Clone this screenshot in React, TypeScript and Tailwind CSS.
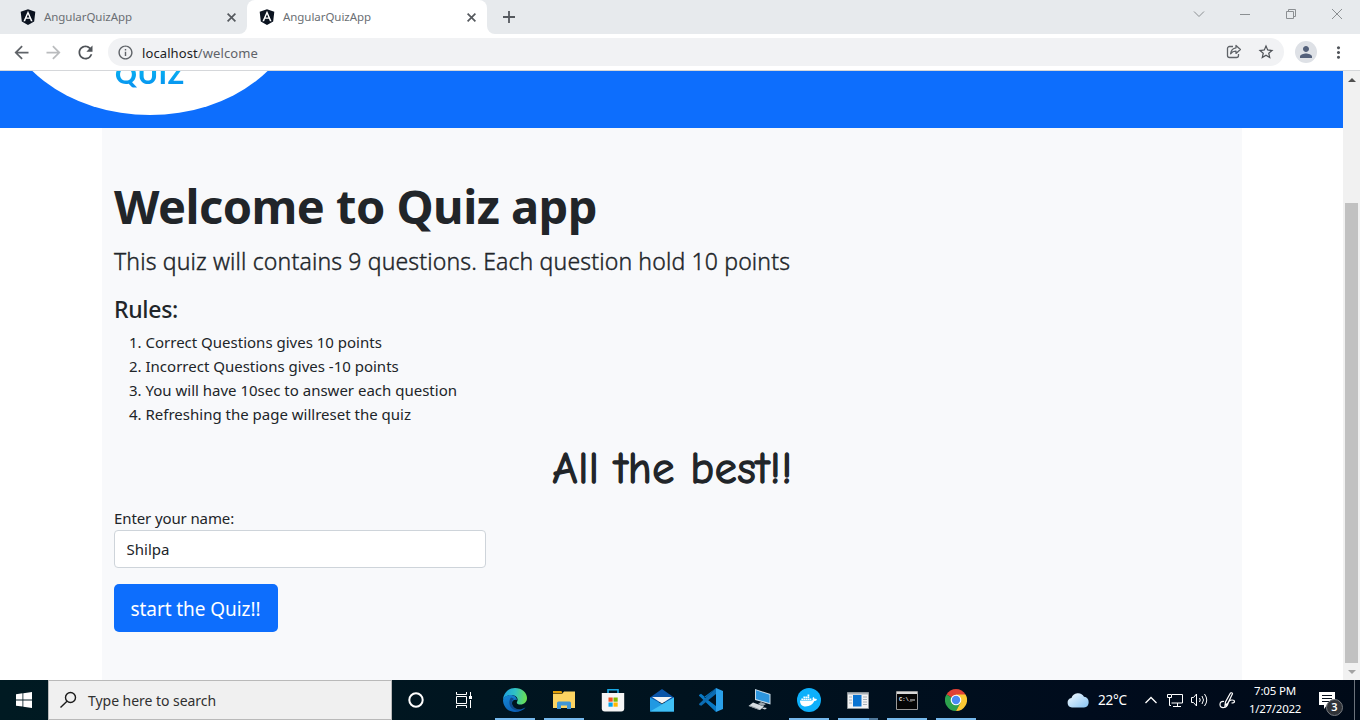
import type { ReactNode } from "react";
import { MdArrowBack, MdArrowForward, MdRefresh, MdInfoOutline, MdStarBorder, MdPerson, MdMoreVert } from "react-icons/md";
import { FaAngular, FaDocker } from "react-icons/fa";

const rules = [
  "Correct Questions gives 10 points",
  "Incorrect Questions gives -10 points",
  "You will have 10sec to answer each question",
  "Refreshing the page willreset the quiz",
];

function TabContent() {
  return (
    <div className="flex h-[34px] items-center pr-[11px] pl-[11px]">
      <FaAngular className="size-[18px] rounded-md bg-[linear-gradient(#fff,#fff)] bg-[length:9px_9px] bg-center bg-no-repeat text-[#0b1320]" />
      <span className="ml-[7px] flex-1 text-[11.5px] tracking-[-0.055px] text-[#6b6f74]">AngularQuizApp</span>
      <svg width="9" height="9" stroke="#55595e" strokeWidth="1.7"><path d="M.6.6l7.800 7.800M8.400.6L.6 8.400" /></svg>
    </div>
  );
}

function WindowControl({ children }: { children: ReactNode }) {
  return (
    <div className="flex h-[28px] w-[46px] items-center justify-center">
      <svg width="12" height="12" viewBox="0 0 12 12" fill="none" stroke="#8b8f92" strokeWidth="1">{children}</svg>
    </div>
  );
}

function Browser() {
  return (
    <header className="h-[71px] shrink-0 border-b border-[#d5d7da] bg-white">
      <div className="flex h-[34px]">
        <div className="w-[247px] rounded-br-[8px] bg-[#e7eaed] pl-2"><TabContent /></div>
        <div className="w-[240px] bg-[linear-gradient(#e7eaed_50%,#fff_50%)]">
          <div className="rounded-t-[8px] bg-white"><TabContent /></div>
        </div>
        <div className="flex flex-1 justify-between rounded-bl-[8px] bg-[#e7eaed]">
          <div className="flex items-center pl-4"><svg width="12" height="12" stroke="#55595e" strokeWidth="1.800"><path d="M6 0v12M0 6h12" /></svg></div>
          <div className="flex">
            <WindowControl><path d="M1 3.5l5 5 5-5" /></WindowControl>
            <WindowControl><path d="M1 6.5h10" /></WindowControl>
            <WindowControl><path d="M1.5 3.5h7v7h-7zM3.5 3.5v-2h7v7h-2" /></WindowControl>
            <WindowControl><path d="M1 1l10 10M11 1L1 11" /></WindowControl>
          </div>
        </div>
      </div>
      <div className="flex h-[36px] items-center text-[#5f6368]">
        <div className="flex w-[108px] items-center gap-[11px] pl-[11px]">
          <MdArrowBack className="size-[21px]" />
          <MdArrowForward className="size-[21px] text-[#babcbe]" />
          <MdRefresh className="size-[21px] text-[#505459]" />
        </div>
        <div className="flex h-[28px] w-[1176px] items-center rounded-full bg-[#f1f2f4] pr-[9px] pl-[9px]">
          <MdInfoOutline className="size-[17px]" />
          <span className="mt-px ml-2 flex-1 text-[13px] leading-5 tracking-[0.1px]"><span className="text-[#202124]">localhost</span>/welcome</span>
          <svg width="16" height="16" viewBox="0 0 16 16" fill="none" stroke="#5f6368" strokeWidth="1.3" strokeLinejoin="round">
            <path d="M7 2.5H3.5a2 2 0 0 0-2 2v7a2 2 0 0 0 2 2h7a2 2 0 0 0 2-2V10" />
            <path d="M10 1.5l4.400 4L10 9.400V7.200C7.500 7.100 6 7.900 4.600 9.800 5 6.500 6.800 4.200 10 3.800z" />
          </svg>
          <MdStarBorder className="ml-[15px] size-[18px] text-[#4d5156]" />
        </div>
        <div className="ml-[11px] flex size-[22px] items-center justify-center rounded-full bg-[#dee1e6]">
          <MdPerson className="size-[18px] text-[#53607a]" />
        </div>
        <MdMoreVert className="ml-[12px] size-[19px] text-[#50545a]" />
      </div>
    </header>
  );
}

function Page() {
  return (
    <div className="h-full min-w-0 flex-1 overflow-hidden bg-white">
      <div className="h-[57px] overflow-hidden bg-[#0d6efd]">
        <div className="-mt-[188px] flex h-[232px] w-[300px] items-end justify-center rounded-[50%] bg-white pb-[26px]">
          <span className="bg-gradient-to-b from-[#12c0f0] to-[#0a8ff0] bg-clip-text font-['Lato',sans-serif] text-[27px] leading-[30px] font-black tracking-[0.8px] text-transparent">QUIZ</span>
        </div>
      </div>
      <main className="ml-[102px] h-[552px] w-[1140px] bg-[#f8f9fb] px-3 pt-[49px] text-[#212529]">
        <h1 className="text-[47px] leading-[58px] font-bold tracking-[-0.53px]">Welcome to Quiz app</h1>
        <p className="mt-2 text-[23px] leading-[36px] font-light tracking-[0.15px] [-webkit-text-stroke:0.4px_#212529]">This quiz will contains 9 questions. Each question hold 10 points</p>
        <h4 className="mt-[16px] text-[23px] leading-[29px] font-medium tracking-[-0.3px]">Rules:</h4>
        <ol className="mt-[6px] flex flex-col text-[15px] leading-6">
          {rules.map((r, i) => (
            <li key={r} className="flex"><span className="mr-1 w-[27.500px] text-right">{i + 1}.</span>{r}</li>
          ))}
        </ol>
        <div className="mt-[17px] pl-px text-center text-[44px] leading-[51px] tracking-[0.7px] font-['Comic_Sans_MS','Comic_Neue',cursive] [-webkit-text-stroke:1.4px_#212529]">All the best!!</div>
        <label className="mt-[12px] block text-[15px] leading-6 tracking-[-0.11px]">Enter your name:</label>
        <div className="flex h-[38px] w-[372px] items-center rounded-[4px] border border-[#ced4da] bg-white px-[11.5px] text-[15px]">Shilpa</div>
        <button className="mt-4 h-[48px] w-[164px] rounded-[5px] bg-[#0d6efd] pt-[2px] pr-px text-[19px] tracking-[-0.07px] text-white">start the Quiz!!</button>
      </main>
    </div>
  );
}

function Scrollbar() {
  return (
    <div className="flex w-[17px] flex-col items-center justify-between bg-[#f1f1f1]">
      <div className="flex h-[17px] items-center"><svg width="8" height="4"><path d="M0 4l4-4 4 4z" fill="#505050" /></svg></div>
      <div className="mt-[115px] h-[460px] w-[13px] bg-[#c1c1c1]" />
      <div className="flex h-[17px] items-center"><svg width="8" height="4"><path d="M0 0l4 4 4-4z" fill="#a3a3a3" /></svg></div>
    </div>
  );
}

function Task({ children, open = false, stacked = false }: { children: ReactNode; open?: boolean; stacked?: boolean }) {
  return (
    <div className="flex h-10 w-[49px] flex-col items-center">
      <div className="flex h-[38px] items-center pt-[2px]">{children}</div>
      {open && (
        <div className="flex h-[2px] w-10 bg-[#76b9ed]">{stacked && <div className="ml-auto w-[9px] bg-[#51799b]" />}</div>
      )}
    </div>
  );
}

function Edge() {
  return (
    <svg width="24" height="24" viewBox="0 0 24 24">
      <defs>
        <linearGradient id="eg" x1="0" y1="0.3" x2="1" y2="0.4"><stop offset="0" stopColor="#1c9fe0" /><stop offset="0.5" stopColor="#30c2c4" /><stop offset="1" stopColor="#6be04f" /></linearGradient>
        <linearGradient id="eb" x1="0" y1="0" x2="0.6" y2="1"><stop offset="0" stopColor="#1588d6" /><stop offset="1" stopColor="#0b5fb4" /></linearGradient>
      </defs>
      <path d="M0 12C.5 5 5.500 0 12 0c7 0 12 4.800 12 10 0 4-3 6.500-6.500 6.500-2.800 0-4.200-1-3.500-2.500 2-3.500-1-7-5.500-7C4 7 1 9.500 0 12z" fill="url(#eg)" />
      <path d="M0 12c1-3.500 4.500-5.500 8.500-5 3 .3 5.500 2.500 5.500 5-4-1-6 2-4.500 5.500 1.500 3.500 5.500 5 9.500 3.500 1.500-.6 2.800-1.300 3.400-1.200C20 22.500 16.500 24 12 24 5 24 0 18.500 0 12z" fill="url(#eb)" />
      <path d="M8 9.500C6 12 5.500 16.500 8.500 20c2.800 3 7.500 3 10.500 1-4 1.200-8-.5-9.500-3.500-1.400-3-.3-5.500 1.500-6.500-1-.8-2-1.300-3-1.500z" fill="#104a8c" />
    </svg>
  );
}

function Taskbar() {
  return (
    <footer className="flex h-10 shrink-0 bg-[linear-gradient(90deg,#001a22,#00131f_50%,#000c1d_80%,#000a18)] text-white">
      <div className="flex w-12 items-center justify-center">
        <svg width="16" height="16" viewBox="0 0 16 16" fill="#fff"><path d="M0 2.200L6.500 1.300V7.500H0zM7.300 1.200L16 0v7.500H7.300zM0 8.400h6.500v6.200L0 13.700zM7.300 8.400H16V16l-8.700-1.200z" /></svg>
      </div>
      <div className="flex w-[344px] items-center border border-[#b9b9b9] bg-[#f0f0f0] pl-[10px]">
        <svg width="18" height="18" viewBox="0 0 18 18" fill="none" stroke="#1b1b1b" strokeWidth="1.4"><circle cx="11.500" cy="6.500" r="5" /><path d="M8 10.200L1.500 16.500" /></svg>
        <span className="ml-[11px] text-[14px] tracking-[-0.04px] text-[#303030]">Type here to search</span>
      </div>
      <div className="flex w-12 items-center justify-center">
        <svg width="16" height="16"><circle cx="8" cy="8" r="6.700" fill="none" stroke="#fff" strokeWidth="2" /></svg>
      </div>
      <div className="mr-[2px] flex w-12 items-center justify-center">
        <svg width="16" height="16" fill="none" stroke="#fff"><path d="M.5 0v2.500h10V0M.5 16v-2.500h10V16M.5 4.500h10v7H.5zM14.500 0v4M14.500 8v8" /><path d="M13 4h3v3h-3z" fill="#fff" stroke="none" /></svg>
      </div>
      <Task open><Edge /></Task>
      <Task open>
        <svg width="22" height="20" viewBox="0 0 22 20"><path d="M0 4h9l2-2.500h11V18H0z" fill="#fcd462" /><path d="M0 1h8.500l1 2.500H0z" fill="#e3a008" /><path d="M4 19v-6q0-1.500 1.500-1.500h11q1.500 0 1.500 1.500v6h-4v-3.500H8V19z" fill="#3f96d6" /></svg>
      </Task>
      <Task>
        <svg width="24" height="24" viewBox="0 0 24 24"><path d="M7 6V1.800h10V6" fill="none" stroke="#19a9e5" strokeWidth="1.600" /><path d="M.8 5h22.400v15.500q0 3-3 3H3.800q-3 0-3-3z" fill="#f5f5f5" /><path d="M7.500 9.500h4.200v4.200H7.500z" fill="#f25022" /><path d="M12.500 9.500h4.200v4.200h-4.200z" fill="#7fba00" /><path d="M7.500 14.500h4.200v4.200H7.500z" fill="#00a4ef" /><path d="M12.500 14.500h4.200v4.200h-4.200z" fill="#ffb900" /></svg>
      </Task>
      <Task>
        <svg width="24" height="23" viewBox="0 0 24 23"><path d="M0 8.500L12 0l12 8.500V13H0z" fill="#0a55a8" /><path d="M0 8.500l12 6.500 12-6.500v14H0z" fill="#2199e2" /><path d="M0 22.500L24 8.500v14z" fill="#40c0f5" /><path d="M2 8h20L12 14.500z" fill="#f4f4f4" /></svg>
      </Task>
      <Task>
        <svg width="24" height="24" viewBox="0 0 24 24"><path d="M17 0L6.700 9.400 2 5.800 0 6.900v.8L17 24V18L5 9z" fill="#0879c5" /><path d="M17 0v6L2.300 17.800.2 16.900v-1.200z" fill="#0b6cb2" /><path d="M17 0l7 3v18l-7 3z" fill="#2aa0ea" /></svg>
      </Task>
      <Task>
        <svg width="24" height="22" viewBox="0 0 24 22"><path d="M7 0l15.500 5v10.500L7 11z" fill="#c9dbe8" /><path d="M8 1.300l13.500 4.500v8.300L8 10z" fill="#2d96df" /><path d="M13 13l5 2-3 2-5-2z" fill="#9ba6ae" /><path d="M5 13.500l11 4-4 3.500-11.500-4z" fill="#d5dce0" /><path d="M2 17l9 3.500" stroke="#8b949b" /><path d="M16 18.500l3 .5-2 1.500-3-1z" fill="#d5dce0" /></svg>
      </Task>
      <Task open><div className="flex size-6 items-center justify-center rounded-full bg-[#0db0fb]"><FaDocker className="size-[17px]" /></div></Task>
      <Task open stacked>
        <svg width="22" height="17"><path d="M.5.5h21v16H.5z" fill="#f3f3f3" stroke="#8c9499" /><path d="M1 1h20v1.500H1z" fill="#a9b1b8" /><path d="M6 3h8.500v11.500H6z" fill="#0a74d1" /><path d="M2 5h3M2 8h3M2 11h3M16 5h4M16 7.500h4M16 10h4M16 12.500h4" stroke="#a9b1b8" /></svg>
      </Task>
      <Task open>
        <svg width="22" height="19"><path d="M.5.500h21v18H.5z" fill="#050505" stroke="#9a9a9a" /><path d="M1 1h20v2H1z" fill="#d9d9d9" /><text x="3" y="9.500" fontSize="5.500" fontFamily="Liberation Mono, monospace" fontWeight="bold" fill="#eee">C:\_</text><path d="M14 9h5" stroke="#ddd" /></svg>
      </Task>
      <Task open>
        <svg width="22" height="22" viewBox="0 0 22 22"><path d="M11 11L1.500 5.500A11 11 0 0 1 20.500 5.500z" fill="#e04135" /><path d="M11 11L1.470 5.500A11 11 0 0 0 11 22l4.800-8.300z" fill="#2da14d" /><path d="M11 11l4.500 2.700L11 22A11 11 0 0 0 20.530 5.500H11z" fill="#fcc934" /><circle cx="11" cy="11" r="5.300" fill="#fff" /><circle cx="11" cy="11" r="4.200" fill="#4a8af4" /></svg>
      </Task>
      <div className="ml-auto flex w-[300px] items-center">
        <div className="w-9 pl-[7px]">
          <svg width="22" height="16" viewBox="0 0 22 16"><defs><linearGradient id="cl" x1="0" y1="0" x2="1" y2="1"><stop stopColor="#f5fbff" /><stop offset="1" stopColor="#86c3f2" /></linearGradient></defs><path d="M5 15.500a4.800 4.800 0 0 1-.5-9.500A6.800 6.800 0 0 1 17 4.800a5.400 5.400 0 0 1 0 10.700z" fill="url(#cl)" /></svg>
        </div>
        <span className="w-[41px] pl-[2px] text-[13.500px] leading-[42px] tracking-[-0.2px]">22°C</span>
        <div className="flex w-7 justify-center"><svg width="12" height="8" fill="none" stroke="#fff" strokeWidth="1.300"><path d="M.5 7L6 1.500 11.500 7" /></svg></div>
        <div className="flex w-[22px] justify-start pl-[2px]"><svg width="17" height="15" fill="none" stroke="#fff"><path d="M5 1.500h10.500v8.500H4.500M2.500 5v7.500h1.500M10.500 10v3.500M6 13.500h8M.5 1.500h4v3h-4z" /></svg></div>
        <div className="flex w-6 justify-center"><svg width="17" height="14" fill="none" stroke="#fff"><path d="M.5 4.500H2.500L5.500 1v12L2.500 9.500H.5zM8.500 5q1.500 2 0 4M11 3q3 4 0 8M13.500 1q4.500 6 0 12" /></svg></div>
        <div className="flex w-8 justify-center"><svg width="17" height="17" fill="none" stroke="#fff" strokeWidth="1.200"><path d="M6 13.500L6.500 10l5-9q1.500-.8 2 .8L9 11zM5 9.500q-4-.5-4 3t4 3q3-.5 4-4t4-3.500q2.500 0 2.500 1.500t-3 1.500" /></svg></div>
        <div className="flex w-16 flex-col items-center text-[11.500px] leading-[18px]">
          <span className="tracking-[-0.17px]">7:05 PM</span>
          <span className="tracking-[-0.29px]">1/27/2022</span>
        </div>
        <div className="relative flex h-10 w-[48px] items-center border-r border-[#6c737c] pl-[12px]">
          <svg width="16" height="17"><path d="M0 0h16v13H8l-3 4v-4H0z" fill="#fff" /><path d="M3 3.500h10M3 6.500h10M3 9.500h7" stroke="#06101e" /></svg>
          <span className="absolute top-[19px] left-[19px] flex size-[17px] items-center justify-center rounded-full border border-[#777b80] bg-[#303338] text-[11px] font-semibold">3</span>
        </div>
      </div>
    </footer>
  );
}

export default function App() {
  return (
    <div className="flex h-[720px] w-[1360px] flex-col overflow-hidden bg-white font-['Noto_Sans',sans-serif]">
      <Browser />
      <div className="flex h-[609px] shrink-0"><Page /><Scrollbar /></div>
      <Taskbar />
    </div>
  );
}
